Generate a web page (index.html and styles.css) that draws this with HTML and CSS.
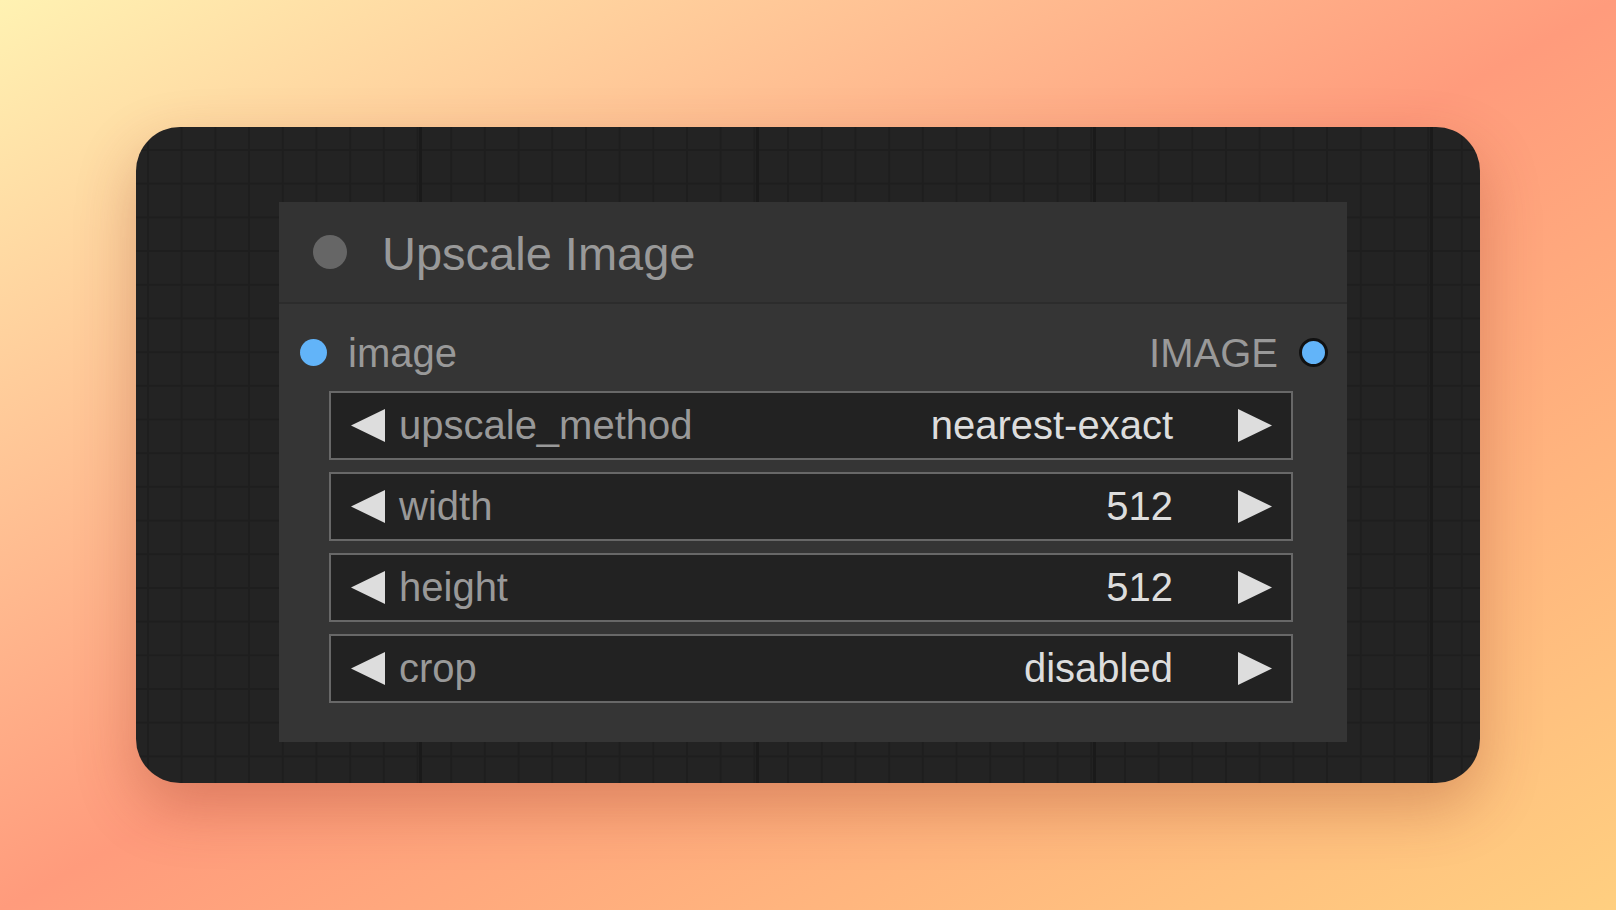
FILE: index.html
```html
<!DOCTYPE html>
<html lang="en">
<head>
    <meta charset="UTF-8">
    <meta name="viewport" content="width=device-width, initial-scale=1.0">
    <title>Upscale Image Node</title>
    <link rel="stylesheet" href="styles.css">
</head>

<body>

    <div class="canvas">
        <div class="node">
            <div class="node-header">
                <span class="title-dot"></span>
                <span class="node-title">Upscale Image</span>
            </div>

            <div class="node-body">
                <div class="io-row">
                    <div class="slot">
                        <span class="dot dot-in"></span>
                        <span class="slot-name">image</span>
                    </div>
                    <div class="slot">
                        <span class="slot-name">IMAGE</span>
                        <span class="dot dot-out"></span>
                    </div>
                </div>

                <!-- widgets -->
                <div class="widget">
                    <svg class="arrow" width="34" height="33" viewBox="0 0 34 33"><polygon points="34,0 34,33 0,16.5"/></svg>
                    <span class="label">upscale_method</span>
                    <span class="value">nearest-exact</span>
                    <svg class="arrow" width="34" height="33" viewBox="0 0 34 33"><polygon points="0,0 0,33 34,16.5"/></svg>
                </div>
                <div class="widget">
                    <svg class="arrow" width="34" height="33" viewBox="0 0 34 33"><polygon points="34,0 34,33 0,16.5"/></svg>
                    <span class="label">width</span>
                    <span class="value">512</span>
                    <svg class="arrow" width="34" height="33" viewBox="0 0 34 33"><polygon points="0,0 0,33 34,16.5"/></svg>
                </div>
                <div class="widget">
                    <svg class="arrow" width="34" height="33" viewBox="0 0 34 33"><polygon points="34,0 34,33 0,16.5"/></svg>
                    <span class="label">height</span>
                    <span class="value">512</span>
                    <svg class="arrow" width="34" height="33" viewBox="0 0 34 33"><polygon points="0,0 0,33 34,16.5"/></svg>
                </div>
                <div class="widget">
                    <svg class="arrow" width="34" height="33" viewBox="0 0 34 33"><polygon points="34,0 34,33 0,16.5"/></svg>
                    <span class="label">crop</span>
                    <span class="value">disabled</span>
                    <svg class="arrow" width="34" height="33" viewBox="0 0 34 33"><polygon points="0,0 0,33 34,16.5"/></svg>
                </div>
            </div>
        </div>
    </div>

</body>
</html>
```

FILE: styles.css
```css
body {
    margin: 0;
    height: 910px;
    font-family: "Liberation Sans", Arial, sans-serif;
    background: linear-gradient(to bottom right, #fff2b2 0%, #ff9b7c 50%, #ffcf80 100%);
    display: flex;
    justify-content: center;
    align-items: center;
}
.canvas {
    box-sizing: border-box;
    width: 1344px;
    height: 656px;
    padding: 75px 133px 41px 143px;
    border-radius: 44px;
    background-color: #232323;
    background-image:
        linear-gradient(90deg, #1a1a1a 3px, transparent 3px),
        linear-gradient(90deg, #1e1e1e 2px, transparent 2px),
        linear-gradient(#1e1e1e 2px, transparent 2px);
    background-size: 337px 337px, 33.7px 33.7px, 33.7px 33.7px;
    background-position: 283px 0, 11px 0, 0 22px;
    box-shadow: 0 24px 60px rgba(140, 50, 30, 0.3);
}
.node {
    width: 1068px;
    height: 540px;
    background: #353535;
}
.node-header {
    height: 100px;
    border-bottom: 2px solid #2c2c2c;
    background: #333;
    display: flex;
    align-items: center;
    padding-left: 34px;
}
.title-dot {
    width: 34px;
    height: 34px;
    border-radius: 50%;
    background: #666;
    margin-right: 35px;
}
.node-title {
    font-size: 47px;
    color: #999;
    padding-top: 3px;
}
.node-body {
    padding: 18px 0 39px;
}
.io-row {
    height: 60px;
    margin-bottom: 9px;
    display: flex;
    justify-content: space-between;
    align-items: center;
    padding: 0 19px 0 21px;
}
.slot {
    display: flex;
    align-items: center;
    gap: 21px;
}
.slot-name {
    font-size: 40px;
    color: #999;
    padding-top: 2px;
}
.dot {
    border-radius: 50%;
    background: #62b4f9;
}
.dot-in {
    width: 27px;
    height: 27px;
}
.dot-out {
    width: 23px;
    height: 23px;
    border: 3px solid #111;
}
.widget {
    box-sizing: border-box;
    height: 69px;
    margin: 0 54px 12px 50px;
    border: 2px solid #686868;
    background: #222;
    display: flex;
    align-items: center;
    padding: 0 19px 0 20px;
}
.widget:last-child {
    margin-bottom: 0;
}
.arrow {
    fill: #ddd;
    flex-shrink: 0;
}
.label {
    font-size: 40px;
    color: #999;
    margin-left: 14px;
    flex: 1;
}
.value {
    font-size: 40px;
    color: #ddd;
    margin-right: 65px;
}
```
